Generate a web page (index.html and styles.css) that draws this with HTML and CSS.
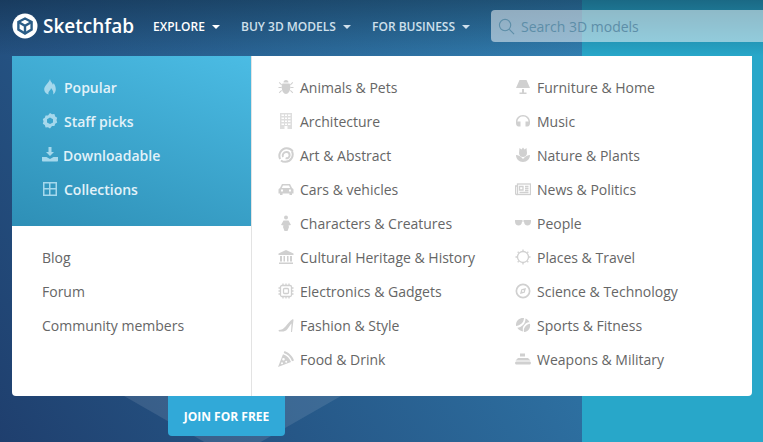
FILE: index.html
```html
<!DOCTYPE html>
<html lang="en">
<head>
  <meta charset="UTF-8" />
  <meta name="viewport" content="width=device-width, initial-scale=1.0" />
  <title>Sketchfab</title>
  <link rel="stylesheet" href="styles.css">
</head>
<body>
  <div class="hero-shape"></div>

  <header class="topbar">
    <a class="logo">
      <svg class="logo-mark" viewBox="0 0 26 26">
        <circle cx="13" cy="13" r="12.500" fill="#fff"/>
        <path d="M13 5.500l6.600 3.400v7.600L13 20.500l-6.600-4V8.900z" fill="none" stroke="#2b5d87" stroke-width="2.400"/>
        <path d="M6.800 9.300l6.200 3.500 6.200-3.500M13 12.800v7.400" fill="none" stroke="#2b5d87" stroke-width="2.400"/>
      </svg>
      <span class="logo-text">Sketchfab</span>
    </a>
    <nav class="nav">
      <a class="nav-link nav-link-active">EXPLORE <i class="caret"></i></a>
      <a class="nav-link">BUY 3D MODELS <i class="caret"></i></a>
      <a class="nav-link">FOR BUSINESS <i class="caret"></i></a>
    </nav>
    <div class="search">
      <svg class="search-icon" viewBox="0 0 18 18">
        <circle cx="7.500" cy="7.500" r="6" fill="none" stroke="currentColor" stroke-width="1.200"/>
        <path d="M12 12l5 5" stroke="currentColor" stroke-width="1.200"/>
      </svg>
      <span>Search 3D models</span>
    </div>
  </header>

  <div class="menu">
    <div class="menu-left">
      <ul class="quick">
        <li>
          <svg class="icon" viewBox="0 0 16 16"><path d="M8 0c.3 2 1.300 3 2.200 4.300.3.500.5 1 .6 1.400.5-.4.700-1 .8-1.700C13 6 13.800 8.200 13.800 10.300c0 2.300-1 4-2.600 5.200.5-2.200-.2-4.200-2.200-6.500-.2 1.500-.7 2-1.700 3-.8.800-1.200 1.900-.7 3.500C3.800 14.800 2.200 12.800 2.200 10.300 2.200 6.500 7 4 8 0z"/></svg>
          Popular
        </li>
        <li>
          <svg class="icon" viewBox="0 0 16 16"><path fill-rule="evenodd" d="M8 0l2 1.300 2.400-.2.800 2.300 2 1.400-.7 2.300.7 2.300-2 1.400-.8 2.300-2.400-.2L8 15.500l-2-1.300-2.400.2-.8-2.300-2-1.400.7-2.300L.8 6.100l2-1.400.8-2.300 2.400.2zM8 4.500l-3 1.700v3.200l3 1.700 3-1.700V6.200z"/></svg>
          Staff picks
        </li>
        <li class="quick-tight">
          <svg class="icon" viewBox="0 0 16 16"><path d="M6.500 0h3v5H12L8 9 4 5h2.500zM0 10h4.500L8 12l3.500-2H16v3.500c0 .8-.5 1-1 1H1c-.5 0-1-.2-1-1z"/></svg>
          Downloadable
        </li>
        <li>
          <svg class="icon" viewBox="0 0 16 16"><path fill-rule="evenodd" d="M1 1h14v14H1zM2.500 2.500v4.500h4.500V2.500zm6 0v4.500h5V2.500zm-6 6v5h4.500v-5zm6 0v5h5v-5z"/></svg>
          Collections
        </li>
      </ul>
      <ul class="links">
        <li>Blog</li>
        <li>Forum</li>
        <li>Community members</li>
      </ul>
    </div>

    <ul class="cats">
      <li>
        <svg class="icon" viewBox="0 0 16 16"><path d="M5.500 3.500C5.500 2 6.500 1 8 1s2.500 1 2.500 2.500zM4.500 4.500h7c.6 1 .8 2 .8 3.500 0 4-2 7-4.300 7s-4.300-3-4.300-7c0-1.500.2-2.500.8-3.500zM1.500 3l2.500 2.500-.7.700L.8 3.700zM14.500 3l.7.700-2.500 2.500-.7-.7zM.5 8h3v1h-3zM12.500 8h3v1h-3zM3.300 11l.7.700-2.500 2.500-.7-.7zM12.700 11l2.500 2.500-.7.700-2.500-2.500z"/></svg>
        Animals &amp; Pets
      </li>
      <li>
        <svg class="icon" viewBox="0 0 16 16"><path fill-rule="evenodd" opacity=".7" d="M2 0h12v16H9.500v-3h-3v3H2zM3.500 1.500v1.500H6V1.500zm3.500 0v1.500h2V1.500zm3 0v1.500h2.500V1.500zM3.500 4.500V6H6V4.500zm3.500 0V6h2V4.500zm3 0V6h2.500V4.500zM3.500 7.500V9H6V7.500zm3.500 0V9h2V7.500zm3 0V9h2.500V7.500zM3.500 10.500V12H6v-1.500zm3.500 0V12h2v-1.500zm3 0V12h2.500v-1.500z"/></svg>
        Architecture
      </li>
      <li>
        <svg class="icon icon-line icon-bold" viewBox="0 0 16 16"><path d="M2.200 12C-.2 7.500 3 1.500 8.500 1.200c2.800-.1 5 1.200 6.200 3.200"/><path d="M14 4.500c2.200 4.500-1 10-6.500 10.300-1.800.1-3.300-.4-4.500-1.400"/><path d="M5 10C3.800 7.500 6 4.800 8.600 5c1.800.1 3 1.500 3 3.200 0 2-2 3.600-4 3"/></svg>
        Art &amp; Abstract
      </li>
      <li>
        <svg class="icon" viewBox="0 0 16 16"><path fill-rule="evenodd" d="M4 3h8l2 4c1 .5 1.500 1 1.500 2v3.500H14V14h-2.500v-1.500h-7V14H2v-1.500H.5V9c0-1 .5-1.500 1.500-2zM5 4.500L3.800 7h8.400L11 4.500zM3 8.500v2h2v-2zm8 0v2h2v-2z"/></svg>
        Cars &amp; vehicles
      </li>
      <li>
        <svg class="icon" viewBox="0 0 16 16"><circle cx="8" cy="2.500" r="2"/><path d="M5.500 5.500h5L13 10l-2.500.5L11 12l-1.500 4h-3L5 12l.5-1.500L3 10z"/></svg>
        Characters &amp; Creatures
      </li>
      <li>
        <svg class="icon" viewBox="0 0 16 16"><path d="M8 1l7.500 3.500V6H.5V4.500zM2 7h2v5.500H2zM5.500 7h1.500v5.500H5.500zM9 7h1.500v5.500H9zM12 7h2v5.500h-2zM1 13.500h14V15H1z"/></svg>
        Cultural Heritage &amp; History
      </li>
      <li>
        <svg class="icon icon-line" viewBox="0 0 16 16"><rect x="2.500" y="2.500" width="11" height="11" rx="1.500"/><rect x="5.500" y="5.500" width="5" height="5" rx="1"/><path d="M5 .5v2M8 .5v2M11 .5v2M5 13.500v2M8 13.500v2M11 13.500v2M.5 5h2M.5 8h2M.5 11h2M13.500 5h2M13.500 8h2M13.500 11h2"/></svg>
        Electronics &amp; Gadgets
      </li>
      <li>
        <svg class="icon" viewBox="0 0 16 16"><path d="M.5 13c3 0 5-1 7-3.500S12 3.500 15 2l.5 1-1.500 12h-1l.5-8.500C11 9 9.500 14 5.500 14.500H1z"/></svg>
        Fashion &amp; Style
      </li>
      <li>
        <svg class="icon" viewBox="0 0 16 16"><path fill-rule="evenodd" d="M6.500 0c4.500 1.500 8 5 9.500 9.500l-2 .8C12.700 6.200 9.800 3.300 5.700 2zM5 3.200c4 1.200 6.700 3.900 8 7.900L0 16zM5.500 7a1.300 1.300 0 100 2.600 1.300 1.300 0 000-2.600zM8.200 9.800a1 1 0 100 2 1 1 0 000-2zM4 11.200a1 1 0 100 2 1 1 0 000-2z"/></svg>
        Food &amp; Drink
      </li>
      <li>
        <svg class="icon" viewBox="0 0 16 16"><path d="M4.500 1h7L15 9H1zM7 10h2v3.500h2.500V15h-7v-1.500H7z"/></svg>
        Furniture &amp; Home
      </li>
      <li>
        <svg class="icon" viewBox="0 0 16 16"><path d="M8 2C3.800 2 1 5 1 8.500V10c0 2 1 3.500 2.500 3.500H5.500v-5H3.500c-.4 0-.7 0-1 .2C2.700 5.500 5 3.500 8 3.500s5.300 2 5.500 5.200c-.3-.2-.6-.2-1-.2h-2v5h2C14 13.500 15 12 15 10V8.500C15 5 12.200 2 8 2z"/></svg>
        Music
      </li>
      <li>
        <svg class="icon" viewBox="0 0 16 16"><path d="M4.500 1l2 1.500L8 .5l1.500 2 2-1.500.5 5c0 2.500-1.800 4-4 4S4 8.500 4 6zM1 8c2 0 5 1.500 7 4 2-2.500 5-4 7-4 0 4-3 7-7 7s-7-3-7-7z"/></svg>
        Nature &amp; Plants
      </li>
      <li>
        <svg class="icon icon-line" viewBox="0 0 16 16"><rect x="2.500" y="3" width="13" height="10.500"/><path d="M2.500 5H.5v7.500c0 .6.400 1 1 1h1"/><path d="M4.500 5.500h3.500v3.500H4.500zM10 5.500h3.500M10 7.500h3.500M10 9.500h3.500M4.500 11.500h9"/></svg>
        News &amp; Politics
      </li>
      <li>
        <svg class="icon" viewBox="0 0 16 16"><path d="M0 5h7v1.500C7 9 5.500 10.500 3.500 10.500S0 9 0 6.500zM9 5h7v1.500c0 2.500-1.500 4-3.500 4S9 9 9 6.500zM7 5.500h2v1H7z"/></svg>
        People
      </li>
      <li>
        <svg class="icon icon-line" viewBox="0 0 16 16"><circle cx="8" cy="8" r="5.500"/><path d="M8 .5v1.500M8 14v1.500M.5 8H2M14 8h1.500M2.700 2.700l1 1M12.300 12.300l1 1M2.700 13.300l1-1M12.300 3.700l1-1"/></svg>
        Places &amp; Travel
      </li>
      <li>
        <svg class="icon" viewBox="0 0 16 16"><path fill-rule="evenodd" d="M8 .5a7.500 7.500 0 110 15 7.500 7.500 0 010-15zM8 2.200a5.800 5.800 0 100 11.600A5.800 5.800 0 008 2.200zM11 5L9.700 9.700 5 11l1.300-4.700zM8 7a1 1 0 100 2 1 1 0 000-2z"/></svg>
        Science &amp; Technology
      </li>
      <li>
        <svg class="icon" viewBox="0 0 16 16"><path d="M9 1c-.2 3-1.200 4.500-2.700 5.800S3 8.700 1 9c-.3-2.500.5-4.800 2.200-6.300C4.800 1.300 7 .7 9 1zM10.500 1.400c1.700.6 3.300 2 4 3.800-1.800 0-3 .5-4.500 2s-2.300 3-2.200 5c0 .8.100 1.500.3 2.300-2.300-.2-4.500-1.500-5.800-3.700 2-.3 4-1.200 5.700-2.800 1.600-1.600 2.400-3.700 2.500-6.600zM15 6.800c.5 2.500-.2 5-1.800 6.500-1.200 1.200-2.800 1.800-4.200 1.800-.4-2-.2-4 1.500-5.800 1.400-1.400 2.700-2.300 4.500-2.500z"/></svg>
        Sports &amp; Fitness
      </li>
      <li>
        <svg class="icon" viewBox="0 0 16 16"><path d="M5 2.500h5v3H5zM3 7h10l2.500 2.500H.5zM1.500 10.500h13c.8 0 1.500.7 1.500 1.500s-.7 1.500-1.500 1.500h-13C.7 13.500 0 12.800 0 12s.7-1.500 1.500-1.500z"/></svg>
        Weapons &amp; Military
      </li>
    </ul>
  </div>

  <a class="join">JOIN FOR FREE</a>
</body>
</html>
```

FILE: styles.css
```css
* {
  box-sizing: border-box;
}
html, body {
  height: 100%;
}
body {
  position: relative;
  margin: 0;
  overflow: hidden;
  font-family: "Open Sans", sans-serif;
  font-size: 14px;
  background:
    linear-gradient(180deg, rgba(10, 30, 50, 0.45) 0, rgba(10, 30, 50, 0) 56px),
    linear-gradient(90deg, transparent 582px, #28a7c9 582px),
    linear-gradient(60deg, #1f3f6e 0, #3384b6 85%);
}
ul {
  list-style: none;
  margin: 0;
  padding: 0;
}

.hero-shape {
  position: absolute;
  left: 124px;
  top: 396px;
  width: 217px;
  height: 46px;
  background: rgba(255, 255, 255, 0.1);
  clip-path: polygon(0 0, 100% 0, 63% 100%, 37% 100%);
}

.topbar {
  position: relative;
  display: flex;
  align-items: center;
  height: 56px;
  padding-left: 12px;
  padding-bottom: 4px;
}
.logo {
  display: flex;
  align-items: center;
  gap: 5px;
  width: 141px;
  color: #fff;
}
.logo-mark {
  width: 26px;
  height: 26px;
}
.logo-text {
  font-size: 19px;
  font-weight: 600;
}
.nav {
  display: flex;
  gap: 21px;
  width: 338px;
}
.nav-link {
  font-size: 12px;
  font-weight: 600;
  color: #cfe0ec;
  white-space: nowrap;
}
.nav-link-active {
  color: #fff;
}
.caret {
  display: inline-block;
  margin-left: 4px;
  vertical-align: 2px;
  border-left: 4px solid transparent;
  border-right: 4px solid transparent;
  border-top: 4px solid currentColor;
}
.search {
  display: flex;
  align-items: center;
  gap: 6px;
  flex: 1;
  height: 32px;
  padding-left: 7px;
  border-radius: 4px 0 0 4px;
  background: rgba(255, 255, 255, 0.5);
  color: #5d8ea8;
}
.search-icon {
  width: 17px;
  height: 17px;
}

.menu {
  position: relative;
  display: flex;
  width: 740px;
  height: 340px;
  margin-left: 12px;
  background: #fff;
  border-radius: 0 0 4px 4px;
}
.menu-left {
  width: 240px;
  border-right: 1px solid #e3e3e3;
}
.quick {
  height: 170px;
  padding: 14px 0 0 30px;
  color: #e2f2f9;
  font-weight: 600;
  background: linear-gradient(200deg, #4bbce4 0, #2e8fb6 100%);
}
.quick li,
.links li,
.cats li {
  display: flex;
  align-items: center;
  height: 34px;
}
.quick li {
  gap: 6px;
}
.quick .quick-tight {
  gap: 5px;
}
.quick .icon {
  fill: #a5d8ec;
}
.links {
  padding: 14px 0 0 30px;
  color: #666;
}
.cats {
  display: grid;
  grid-template-rows: repeat(9, 34px);
  grid-auto-flow: column;
  grid-template-columns: 237px 1fr;
  padding: 14px 0 0 26px;
  color: #666;
}
.cats li {
  gap: 6px;
  white-space: nowrap;
}
.icon {
  flex: none;
  width: 16px;
  height: 16px;
  fill: #d0d0d0;
}
.icon-line {
  fill: none;
  stroke: #d0d0d0;
  stroke-width: 1.300;
}
.icon-bold {
  stroke-width: 2;
}

.join {
  position: relative;
  display: flex;
  align-items: center;
  justify-content: center;
  width: 117px;
  height: 40px;
  margin-left: 168px;
  font-size: 12px;
  font-weight: 700;
  color: #fff;
  background: #31a9d8;
  border-radius: 0 0 4px 4px;
}
```
